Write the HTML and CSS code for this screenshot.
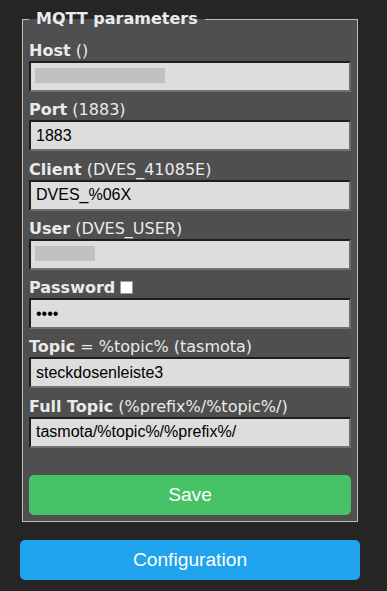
FILE: index.html
```
<!DOCTYPE html>
<html>
    <head>
        <meta charset="utf-8">
        <link rel="stylesheet" href="styles.css">
    </head>
    <body>
        <div class="container">
            <fieldset class="box">
                <legend>MQTT parameters</legend>
                <div class="field">
                    <label><b>Host</b> ()</label>
                    <div class="masked"><input type="text" value=""><span class="blur wide"></span></div>
                </div>
                <div class="field">
                    <label><b>Port</b> (1883)</label>
                    <input type="text" value="1883">
                </div>
                <div class="field">
                    <label><b>Client</b> (DVES_41085E)</label>
                    <input type="text" value="DVES_%06X">
                </div>
                <div class="field">
                    <label><b>User</b> (DVES_USER)</label>
                    <div class="masked"><input type="text" value=""><span class="blur short"></span></div>
                </div>
                <div class="field">
                    <label><b>Password</b> <span class="check"></span></label>
                    <input type="password" value="1234">
                </div>
                <div class="field">
                    <label><b>Topic</b> = %topic% (tasmota)</label>
                    <input type="text" value="steckdosenleiste3">
                </div>
                <div class="field">
                    <label><b>Full Topic</b> (%prefix%/%topic%/)</label>
                    <input type="text" value="tasmota/%topic%/%prefix%/">
                </div>
                <button type="button" class="btn save">Save</button>
            </fieldset>
            <button type="button" class="btn config">Configuration</button>
        </div>
    </body>
</html>
```
FILE: styles.css
```
body {
    background: #252525;
    color: #eaeaea;
    margin: 0;
    padding: 0;
    font-family: "DejaVu Sans", Verdana, sans-serif;
    font-size: 16px;
}
.container {
    width: 340px;
    margin-left: 20px;
    padding-top: 10px;
}
.box {
    margin: 0 2px;
    padding: 0 6px 6px 6px;
    border: 1px solid #bdbdbd;
    background: #4f4f4f;
}
.box legend {
    font-weight: bold;
    padding: 0 7px;
    line-height: 18px;
}
.field {
    display: flex;
    flex-direction: column;
    margin-top: 8.3px;
}
.field:first-of-type {
    margin-top: 13px;
}
.field label {
    line-height: 19px;
    height: 19px;
    margin-bottom: 1px;
    white-space: nowrap;
}
.field input {
    box-sizing: border-box;
    width: 100%;
    height: 31px;
    margin: 0;
    padding: 0 5px;
    background: #dddddd;
    color: #000;
    font-family: "Liberation Sans", Arial, sans-serif;
    font-size: 16px;
    border-style: solid;
    border-width: 2px;
    border-color: #1e1e1e #707070 #707070 #1e1e1e;
    outline: none;
}
.masked {
    position: relative;
}
.blur {
    position: absolute;
    top: 7px;
    left: 6px;
    height: 15px;
    background: #c1c1c1;
}
.blur.wide {
    width: 130px;
}
.blur.short {
    width: 60px;
}
.check {
    display: inline-block;
    box-sizing: border-box;
    width: 13px;
    height: 13px;
    background: #fff;
    border: 1px solid #9a9a9a;
    vertical-align: -1px;
}
.btn {
    display: block;
    width: 100%;
    height: 40px;
    border: 0;
    border-radius: 5px;
    color: #fff;
    font-family: "Liberation Sans", Arial, sans-serif;
    font-size: 19.2px;
    line-height: 40px;
    padding: 0;
    cursor: pointer;
}
.save {
    background: #47c266;
    margin-top: 27px;
}
.config {
    background: #1fa3ec;
    margin-top: 18px;
}
```
